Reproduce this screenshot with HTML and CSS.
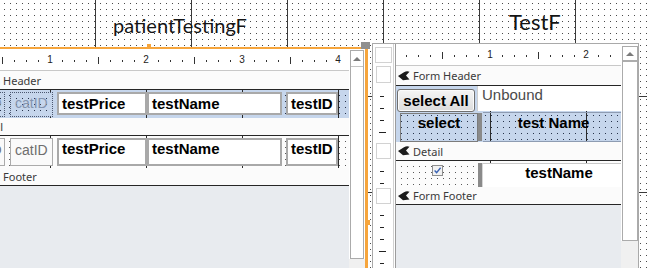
FILE: index.html
```html
<!DOCTYPE html>
<html lang="en">
<head>
<meta charset="UTF-8">
<title>Form Design View</title>
<link rel="stylesheet" href="styles.css">
</head>
<body>
<div class="canvas">
    <div class="title title-left">patientTestingF</div>
    <div class="title title-right">TestF</div>

    <div class="win win-left">
        <div class="main lw-main">
            <div class="ruler"><div class="nums"><span><i>1</i></span><span><i>2</i></span><span><i>3</i></span><span><i>4</i></span></div></div>
            <div class="band lw-band-head">
                <svg class="bicon" viewBox="0 0 12 10"><path d="M0 5 L6 1.2 C8 0 10 0 11.5 0.8 L8 4.6 L11.5 8.4 L5 9.2 Z" fill="#1c1c1c"/></svg>Form Header
            </div>
            <div class="sec sec-blue lw-head">
                <div class="ctl ghost w-a">catID</div>
                <div class="ctl ghost w-cat">catID</div>
                <div class="ctl box w-price">testPrice</div>
                <div class="ctl box w-name">testName</div>
                <div class="ctl box w-id">testID</div>
            </div>
            <div class="band lw-band">
                <svg class="bicon" viewBox="0 0 12 10"><path d="M0 5 L6 1.2 C8 0 10 0 11.5 0.8 L8 4.6 L11.5 8.4 L5 9.2 Z" fill="#1c1c1c"/></svg>Detail
            </div>
            <div class="sec sec-white lw-detail">
                <div class="ctl plain w-a">catID</div>
                <div class="ctl plain w-cat">catID</div>
                <div class="ctl box w-price">testPrice</div>
                <div class="ctl box w-name">testName</div>
                <div class="ctl box w-id">testID</div>
            </div>
            <div class="band lw-band">
                <svg class="bicon" viewBox="0 0 12 10"><path d="M0 5 L6 1.2 C8 0 10 0 11.5 0.8 L8 4.6 L11.5 8.4 L5 9.2 Z" fill="#1c1c1c"/></svg>Form Footer
            </div>
            <div class="fill-gray"></div>
        </div>
        <div class="scroll-col lw-scroll">
            <div class="vscroll"><div class="up"></div></div>
            <div class="scroll-fill"></div>
        </div>
    </div>

    <div class="win win-right">
        <div class="main rw-main">
            <div class="rrow r-ruler">
                <div class="strip"><div class="selbox corner"></div></div>
                <div class="ruler"><div class="nums"><span><i>1</i></span><span><i>2</i></span></div></div>
            </div>
            <div class="rrow r-band r-band1">
                <div class="strip"><div class="selbox"></div></div>
                <div class="band">
                    <svg class="bicon" viewBox="0 0 12 10"><path d="M0 5 L6 1.2 C8 0 10 0 11.5 0.8 L8 4.6 L11.5 8.4 L5 9.2 Z" fill="#1c1c1c"/></svg>Form Header
                </div>
            </div>
            <div class="rrow r-head">
                <div class="strip vticks"></div>
                <div class="sec sec-blue rw-head">
                    <div class="rw-row1">
                        <div class="ctl btn">select All</div>
                        <div class="ctl unbound">Unbound</div>
                    </div>
                    <div class="rw-row2">
                        <div class="ctl sel-lbl">select</div>
                        <div class="ctl sel-bar"></div>
                        <div class="ctl tn-lbl">test Name</div>
                    </div>
                </div>
            </div>
            <div class="rrow r-band r-band2">
                <div class="strip"><div class="selbox"></div></div>
                <div class="band">
                    <svg class="bicon" viewBox="0 0 12 10"><path d="M0 5 L6 1.2 C8 0 10 0 11.5 0.8 L8 4.6 L11.5 8.4 L5 9.2 Z" fill="#1c1c1c"/></svg>Detail
                </div>
            </div>
            <div class="rrow r-detail">
                <div class="strip vticks"></div>
                <div class="sec sec-white rw-detail">
                    <div class="chk-cell">
                        <svg class="chk" viewBox="0 0 11 11"><rect x="0.5" y="0.5" width="10" height="10" fill="#f2f2f2" stroke="#8f8f8f"/><path d="M2.6 5.6 L4.6 7.6 L8.6 2.8" fill="none" stroke="#3a63b4" stroke-width="1.4"/></svg>
                    </div>
                    <div class="ctl det-bar"></div>
                    <div class="ctl det-box">testName</div>
                </div>
            </div>
            <div class="rrow r-band r-band3">
                <div class="strip"><div class="selbox"></div></div>
                <div class="band">
                    <svg class="bicon" viewBox="0 0 12 10"><path d="M0 5 L6 1.2 C8 0 10 0 11.5 0.8 L8 4.6 L11.5 8.4 L5 9.2 Z" fill="#1c1c1c"/></svg>Form Footer
                </div>
            </div>
            <div class="rrow r-foot">
                <div class="strip vticks"></div>
                <div class="fill-gray"></div>
            </div>
        </div>
        <div class="scroll-col rw-scroll">
            <div class="vscroll"><div class="up"></div></div>
            <div class="scroll-fill"></div>
        </div>
    </div>

    <div class="handle"></div>
</div>
</body>
</html>
```

FILE: styles.css
```css
* {
    box-sizing: border-box;
}

body {
    margin: 0;
    font-family: 'Liberation Sans', Arial, sans-serif;
    background: #fff;
}

.canvas {
    position: relative;
    width: 647px;
    height: 268px;
    overflow: hidden;
    background-color: #fff;
    background-image:
        linear-gradient(90deg, transparent 95px, #3a3a3a 95px, #3a3a3a 96px, transparent 96px),
        linear-gradient(transparent 96px, #3a3a3a 96px, #3a3a3a 97px, transparent 97px, transparent 192px, #3a3a3a 192px, #3a3a3a 193px, transparent 193px),
        linear-gradient(90deg, #fff 5px, transparent 5px),
        linear-gradient(#fff 5px, #4a4a4a 5px);
    background-size: 96px 100%, 100% 100%, 6px 6px, 6px 6px;
    background-position: 0 0, 0 0, -1px -2px, -1px -2px;
}

.title {
    position: absolute;
    font-family: Lato, 'Open Sans', sans-serif;
    color: #141414;
    white-space: nowrap;
    line-height: 1;
}

.title-left {
    left: 113px;
    top: 15px;
    font-size: 20px;
}

.title-right {
    left: 509px;
    top: 11px;
    font-size: 22px;
}

/* windows */
.win {
    position: absolute;
    display: flex;
    background: #fff;
}

.win-left {
    left: -44px;
    top: 47px;
    width: 412px;
    height: 230px;
    border-top: 2px solid #f6a53c;
    border-right: 3px solid #f6a53c;
}

.win-left::before {
    content: '';
    position: absolute;
    left: 191px;
    top: -5px;
    width: 4px;
    height: 3px;
    background: #f6a53c;
}

.win-left::after {
    content: '';
    position: absolute;
    right: -5px;
    top: 171px;
    width: 5px;
    height: 5px;
    background: #f6a53c;
}

.win-right {
    left: 372px;
    top: 43px;
    width: 267px;
    height: 230px;
    border: 1px solid #a9a9a9;
    border-bottom: none;
}

.handle {
    position: absolute;
    left: 361px;
    top: 42px;
    width: 9px;
    height: 7px;
    background: #8f8f8f;
}

.main {
    display: flex;
    flex-direction: column;
    flex: none;
}

.lw-main {
    width: 393px;
}

.rw-main {
    width: 248px;
}

/* rulers */
.ruler {
    height: 22px;
    flex: none;
    overflow: hidden;
    border-bottom: 1px solid #c8c8c8;
    background-color: #fff;
    background-image:
        repeating-linear-gradient(90deg, transparent 0, transparent 47px, #333 47px, #333 48px, transparent 48px, transparent 96px),
        repeating-linear-gradient(90deg, transparent 0, transparent 11px, #333 11px, #333 12px);
    background-size: 100% 7px, 100% 2px;
    background-position: -1px 8px, -1px 11px;
    background-repeat: no-repeat;
}

.nums {
    display: flex;
    margin-left: 46px;
}

.nums span {
    width: 96px;
    flex: none;
    text-align: center;
    font-size: 10px;
    line-height: 21px;
    color: #222;
}

.nums i {
    font-style: normal;
    background: #fff;
    padding: 0 1px;
}

/* section bands */
.band {
    flex: none;
    display: flex;
    align-items: center;
    gap: 3px;
    padding-left: 2px;
    background: #fbfbfb;
    border-bottom: 1px solid #262626;
    font-family: 'Noto Sans', sans-serif;
    font-size: 11px;
    color: #3a3a3a;
    white-space: nowrap;
}

.lw-band-head {
    height: 19px;
}

.lw-band {
    height: 18px;
}

.bicon {
    width: 12px;
    height: 10px;
    flex: none;
}

/* section bodies */
.sec {
    flex: none;
    display: flex;
    align-items: flex-start;
}

.sec-blue {
    background-color: #c6d6ec;
    background-image:
        linear-gradient(90deg, transparent 95px, #2a2a2a 95px, #2a2a2a 96px, transparent 96px),
        linear-gradient(90deg, #c6d6ec 5px, transparent 5px),
        linear-gradient(#c6d6ec 5px, #27324a 5px);
    background-size: 96px 100%, 6px 6px, 6px 6px;
    background-position: -1px 0, 0 0, 0 0;
}

.sec-white {
    background-color: #fcfcfc;
    background-image:
        linear-gradient(90deg, transparent 95px, #2a2a2a 95px, #2a2a2a 96px, transparent 96px),
        linear-gradient(90deg, #fcfcfc 5px, transparent 5px),
        linear-gradient(#fcfcfc 5px, #5a5a5a 5px);
    background-size: 96px 100%, 6px 6px, 6px 6px;
    background-position: -1px 0, 0 0, 0 0;
}

.fill-gray {
    flex: 1;
    background: #e8ebef;
}

.lw-head {
    height: 28px;
    padding-top: 2px;
}

.lw-detail {
    height: 32px;
    padding-top: 2px;
}

/* controls */
.ctl {
    flex: none;
    white-space: nowrap;
    overflow: hidden;
}

.box {
    background: #fff;
    border: 2px solid #a9a9a9;
    font-weight: bold;
    font-size: 15px;
    color: #000;
    padding: 0 3px;
}

.lw-head .box {
    height: 23px;
    line-height: 19px;
}

.lw-detail .box,
.lw-detail .plain {
    height: 28px;
    line-height: 18px;
}

.ghost {
    height: 25px;
    border: 1px dotted #4c5870;
    color: #8393ae;
    font-size: 14px;
    padding: 2px 4px;
    background-color: #c6d6ec;
    background-image:
        linear-gradient(90deg, #c6d6ec 5px, transparent 5px),
        linear-gradient(#c6d6ec 5px, #27324a 5px);
    background-size: 6px 6px, 6px 6px;
}

.plain {
    border: 1px solid #ababab;
    color: #6e6e6e;
    font-size: 14px;
    padding: 2px 4px;
    background: #fafafa;
}

.w-a {
    margin-left: 8px;
    width: 41px;
}

.w-cat {
    margin-left: 5px;
    width: 43px;
}

.w-price {
    margin-left: 4px;
    width: 90px;
}

.w-name {
    width: 135px;
}

.w-id {
    margin-left: 4px;
    width: 52px;
}

/* scrollbars */
.scroll-col {
    flex: none;
    display: flex;
    flex-direction: column;
}

.lw-scroll {
    width: 16px;
    padding: 1px 1px 0;
}

.rw-scroll {
    width: 17px;
    padding: 2px 0 0 1px;
}

.vscroll {
    flex: none;
    background: #fff;
    border: 1px solid #ababab;
}

.lw-scroll .vscroll {
    height: 209px;
}

.rw-scroll .vscroll {
    height: 195px;
}

.up {
    height: 16px;
    border-bottom: 1px solid #c4c4c4;
    display: flex;
    align-items: center;
    justify-content: center;
}

.rw-scroll .up {
    height: 15px;
    border-bottom: 2px solid #adadad;
}

.up::before {
    content: '';
    border-left: 4px solid transparent;
    border-right: 4px solid transparent;
    border-bottom: 4px solid #7b7b7b;
}

.scroll-fill {
    flex: 1;
    background: #f0f0f0;
    margin: 0 -1px;
}

.rw-scroll .scroll-fill {
    margin: 0 0 0 -1px;
}

/* right window rows */
.rrow {
    display: flex;
    flex: none;
}

.rrow > .ruler,
.rrow > .band,
.rrow > .sec,
.rrow > .fill-gray {
    flex: 1;
}

.strip {
    width: 23px;
    flex: none;
    background-color: #fff;
    border-right: 1px solid #9c9c9c;
    box-shadow: inset -1px 0 0 #fff, inset -2px 0 0 #d2d2d2;
}

.selbox {
    background: #fff;
    border: 1px solid #d2d2d2;
}

.corner {
    width: 17px;
    height: 16px;
    margin: 3px 0 0 2px;
}

.r-band .selbox {
    width: 15px;
    margin-left: 3px;
}

.r-ruler {
    height: 22px;
}

.r-band1 {
    height: 20px;
}

.r-band1 .selbox {
    height: 17px;
}

.r-head {
    height: 56px;
}

.r-band2 {
    height: 19px;
}

.r-band2 .selbox,
.r-band3 .selbox {
    height: 16px;
    margin-top: 1px;
}

.r-detail {
    height: 26px;
}

.r-band3 {
    height: 18px;
}

.r-foot {
    flex: 1;
}

.vticks {
    background-image:
        linear-gradient(transparent 46px, #222 46px, #222 47px, transparent 47px),
        repeating-linear-gradient(transparent 0, transparent 10px, #222 10px, #222 11px, transparent 11px, transparent 12px);
    background-size: 7px 100%, 4px 100%;
    background-position: 6px 0, 7px 0;
    background-repeat: no-repeat;
}

.rw-head {
    flex-direction: column;
}

.rw-row1 {
    display: flex;
    height: 26px;
    width: 100%;
}

.rw-row2 {
    display: flex;
    height: 30px;
    width: 100%;
}

.btn {
    margin: 3px 0 0 1px;
    width: 78px;
    height: 23px;
    border: 1px solid #707070;
    border-radius: 3px;
    background: linear-gradient(#f5f5f5, #dcdcdc);
    box-shadow: inset 0 0 0 1px #fbfbfb;
    font-weight: bold;
    font-size: 15px;
    text-align: center;
    line-height: 22px;
}

.unbound {
    margin-left: 2px;
    flex: 1;
    height: 25px;
    background: #fff;
    border-left: 1px solid #cfcfcf;
    padding-left: 4px;
    font-size: 15px;
    line-height: 18px;
    color: #4a4a4a;
}

.sel-lbl {
    margin: 1px 0 0 4px;
    width: 78px;
    height: 29px;
    border: 1px solid #7c7c7c;
    font-weight: bold;
    font-size: 15px;
    text-align: center;
    line-height: 18px;
}

.sel-bar {
    margin-top: 1px;
    width: 4px;
    height: 28px;
    background: #8a8a8a;
}

.tn-lbl {
    margin-left: 1px;
    flex: 1;
    height: 30px;
    border-top: 1px solid #8e9cb2;
    border-bottom: 1px solid #8e9cb2;
    font-weight: bold;
    font-size: 15px;
    text-align: center;
    padding: 1px 0 0 3px;
    line-height: 18px;
}

.rw-detail {
    align-items: stretch;
}

.chk-cell {
    width: 82px;
    flex: none;
    display: flex;
    justify-content: center;
    align-items: flex-start;
    padding-top: 4px;
}

.chk {
    width: 11px;
    height: 11px;
}

.det-bar {
    width: 4px;
    margin-top: 2px;
    background: #8a8a8a;
}

.det-box {
    flex: 1;
    margin-top: 2px;
    background: #fff;
    border-top: 1px solid #c9c9c9;
    border-left: 1px solid #d6d6d6;
    font-weight: bold;
    font-size: 15px;
    text-align: center;
    padding-left: 14px;
    line-height: 18px;
}
```
